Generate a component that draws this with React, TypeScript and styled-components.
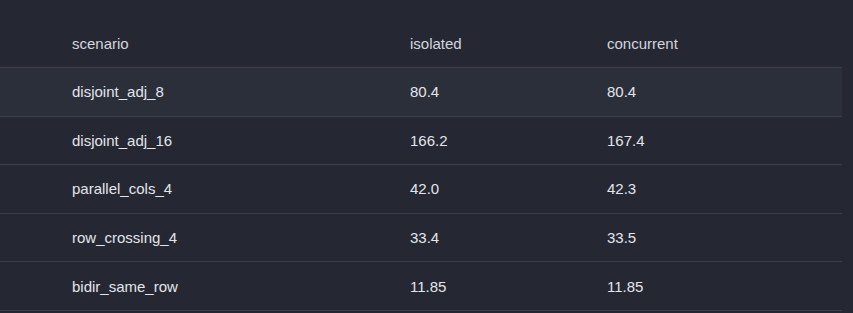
import React from "react";
import styled, { createGlobalStyle } from "styled-components";

const Global = createGlobalStyle`
  html, body { margin: 0; padding: 0; background: #252833; }
  body { font-family: "Liberation Sans", Arial, sans-serif; }
`;

const Page = styled.div`
  width: 853px;
  height: 313px;
  overflow: hidden;
  background: #252833;
  padding-top: 19.4px;
  box-sizing: border-box;
`;

const Table = styled.div`
  width: 842px;
  display: flex;
  flex-direction: column;
`;

const Row = styled.div<{ $header?: boolean; $hover?: boolean }>`
  display: grid;
  grid-template-columns: 394px 197px 1fr;
  height: 48.6px;
  flex: none;
  box-sizing: border-box;
  border-bottom: 1px solid #3b3f4b;
  align-items: center;
  background: ${(p) => (p.$hover ? "#2b2f3a" : "transparent")};
  color: ${(p) => (p.$header ? "#d3d6dd" : "#e3e5ea")};
  font-size: 15px;
  line-height: 17px;
`;

const Cell = styled.div<{ $first?: boolean }>`
  padding-left: ${(p) => (p.$first ? "72px" : "16px")};
  white-space: nowrap;
`;

const rows = [
  ["disjoint_adj_8", "80.4", "80.4"],
  ["disjoint_adj_16", "166.2", "167.4"],
  ["parallel_cols_4", "42.0", "42.3"],
  ["row_crossing_4", "33.4", "33.5"],
  ["bidir_same_row", "11.85", "11.85"],
];

export default function App() {
  return (
    <Page>
      <Global />
      <Table>
        <Row $header>
          <Cell $first>scenario</Cell>
          <Cell>isolated</Cell>
          <Cell>concurrent</Cell>
        </Row>
        {rows.map((r, i) => (
          <Row key={r[0]} $hover={i === 0}>
            <Cell $first>{r[0]}</Cell>
            <Cell>{r[1]}</Cell>
            <Cell>{r[2]}</Cell>
          </Row>
        ))}
      </Table>
    </Page>
  );
}
